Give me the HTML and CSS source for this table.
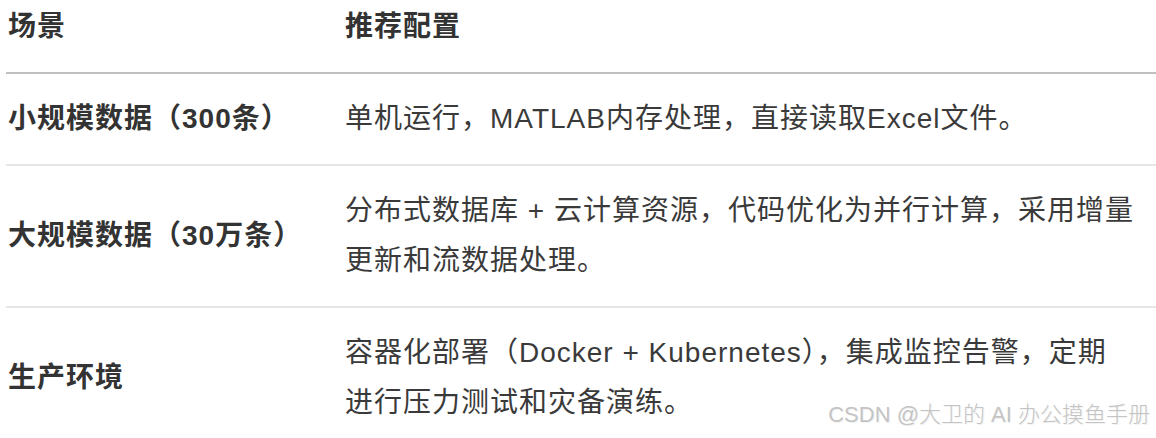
FILE: index.html
```html
<!DOCTYPE html>
<html lang="zh-CN">
<head>
<meta charset="utf-8">
<title>场景与推荐配置</title>
<link rel="stylesheet" href="styles.css">
</head>
<body>
<div class="page">
  <table class="cfg">
    <thead>
      <tr>
        <th class="c1">场景</th>
        <th class="c2">推荐配置</th>
      </tr>
    </thead>
    <tbody>
      <tr>
        <td class="c1"><strong>小规模数据（300条）</strong></td>
        <td class="c2">单机运行，MATLAB内存处理，直接读取Excel文件。</td>
      </tr>
      <tr>
        <td class="c1"><strong>大规模数据（30万条）</strong></td>
        <td class="c2">分布式数据库 + 云计算资源，代码优化为并行计算，采用增量<br>更新和流数据处理。</td>
      </tr>
      <tr>
        <td class="c1"><strong>生产环境</strong></td>
        <td class="c2">容器化部署（Docker + Kubernetes），集成监控告警，定期<br>进行压力测试和灾备演练。</td>
      </tr>
    </tbody>
  </table>
  <div class="watermark">CSDN @大卫的 AI 办公摸鱼手册</div>
</div>
</body>
</html>
```

FILE: styles.css
```css
html, body {
  margin: 0;
  padding: 0;
  background: #ffffff;
}

.page {
  position: relative;
  width: 1156px;
  height: 438px;
  overflow: hidden;
  font-family: "Liberation Sans", "Noto Sans CJK SC", sans-serif;
  color: #3a3a3a;
}

.cfg {
  margin-left: 6px;
  width: 1150px;
  border-collapse: collapse;
  table-layout: fixed;
  font-size: 28px;
  line-height: 50px;
  letter-spacing: 1px;
}

.cfg th {
  text-align: left;
  font-weight: 700;
  color: #333333;
  padding: 2px 0 20px 2px;
  border-bottom: 2px solid #bfbfbf;
}

.cfg td {
  vertical-align: middle;
  padding: 20px 0 20px 2px;
  border-bottom: 2px solid #e6e6e6;
}

.cfg .c1 {
  width: 335px;
}

.cfg .c2 {
  padding-right: 0;
}

.cfg strong {
  font-weight: 700;
  color: #333333;
}

.watermark {
  position: absolute;
  right: 6px;
  top: 401px;
  font-family: "Liberation Sans", "Noto Sans CJK SC", sans-serif;
  font-size: 22px;
  font-weight: 300;
  line-height: 28px;
  color: #c4c4c4;
  text-shadow: 1px 1px 0 #f3f3f3;
  white-space: nowrap;
}
```
